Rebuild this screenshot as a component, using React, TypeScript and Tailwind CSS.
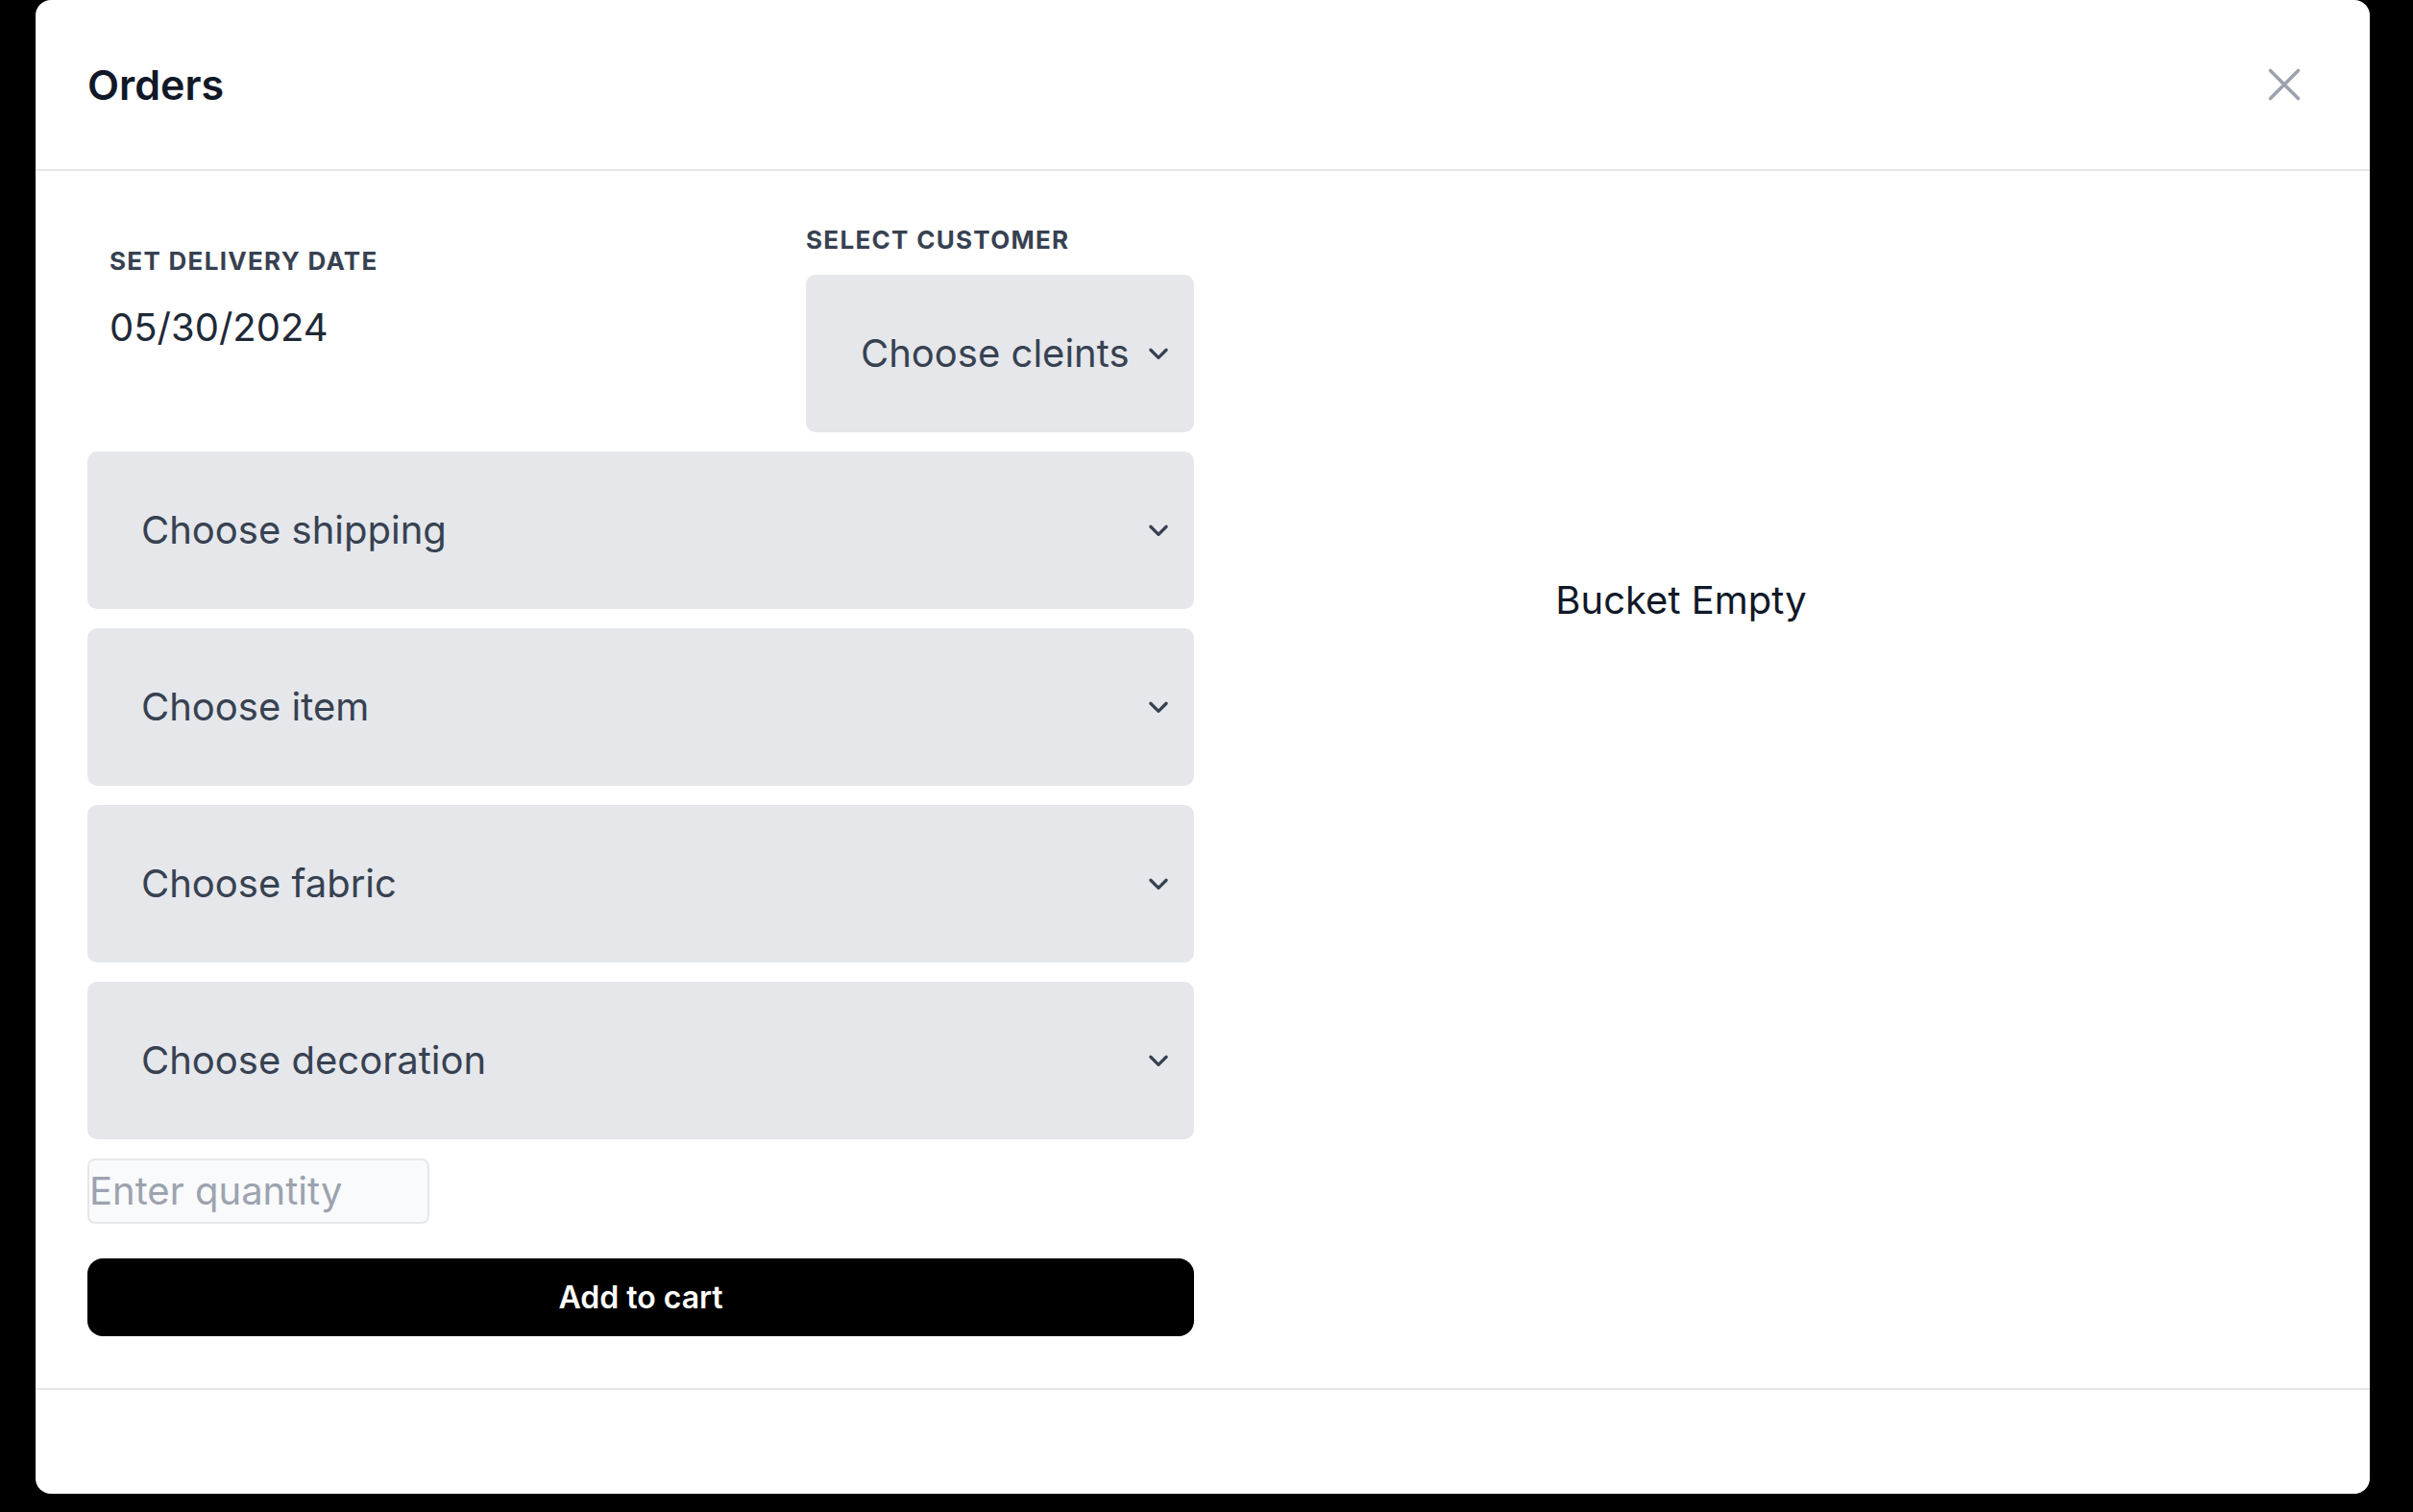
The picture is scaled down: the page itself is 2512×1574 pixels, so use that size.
import React from 'react';

const Chevron: React.FC = () => (
  <svg width="30" height="30" viewBox="0 0 24 24" fill="none" stroke="#374151" strokeWidth="2.6" strokeLinecap="round" strokeLinejoin="round">
    <path d="M5.5 9 12 15.5 18.5 9" />
  </svg>
);

const SelectBox: React.FC<{ label: string; className?: string }> = ({ label, className = '' }) => (
  <div className={`flex items-center justify-between h-[164px] bg-[#e5e7eb] rounded-[10px] pl-[56px] pr-[22px] ${className}`}>
    <span className="text-[40px] text-[#374151]">{label}</span>
    <Chevron />
  </div>
);

const App: React.FC = () => {
  const selects = ['Choose shipping', 'Choose item', 'Choose fabric', 'Choose decoration'];

  return (
    <div className="w-[2512px] h-[1574px] bg-black pl-[37px] overflow-hidden" style={{ fontFamily: 'Inter, "Noto Sans", sans-serif' }}>
      <div className="w-[2430px] h-[1555px] bg-white rounded-[16px] flex flex-col">
        <header className="h-[178px] flex items-center justify-between pl-[54px] pr-[60px] border-b-2 border-[#e5e7eb]">
          <h1 className="text-[43px] font-semibold text-[#111827]">Orders</h1>
          <button className="text-[#9ca3af]">
            <svg width="58" height="58" viewBox="0 0 24 24" fill="none" stroke="currentColor" strokeWidth="1.5" strokeLinecap="round">
              <path d="M6 18 18 6M6 6l12 12" />
            </svg>
          </button>
        </header>

        <div className="flex-1 flex px-[54px] pt-[56px]">
          <div className="w-[1152px] flex flex-col">
            <div className="flex justify-between items-start">
              <div className="pl-[23px] pt-[22px]">
                <div className="text-[26px] leading-[32px] font-bold tracking-wider text-[#374151]">SET DELIVERY DATE</div>
                <div className="mt-[25px] text-[40px] leading-[56px] text-[#1f2937]">05/30/2024</div>
              </div>
              <div className="w-[404px]">
                <div className="text-[26px] leading-[32px] font-bold tracking-wider text-[#374151]">SELECT CUSTOMER</div>
                <SelectBox label="Choose cleints" className="mt-[20px] h-[163px] pl-[57px]" />
              </div>
            </div>

            <div className="flex flex-col gap-[20px] mt-[20px]">
              {selects.map((s) => (
                <SelectBox key={s} label={s} />
              ))}
              <div className="w-[356px] h-[68px] bg-[#f9fafb] border-2 border-[#e5e7eb] rounded-[8px] flex items-center">
                <span className="text-[40px] text-[#9ca3af] leading-none">Enter quantity</span>
              </div>
            </div>

            <button className="mt-[36px] h-[81px] w-full bg-black rounded-[16px] text-white text-[32px] font-semibold">
              Add to cart
            </button>
          </div>

          <div className="flex-1 flex justify-center pr-[156px] pt-[363px]">
            <span className="text-[40px] text-[#111827] leading-[56px] h-[56px]">Bucket Empty</span>
          </div>
        </div>

        <div className="h-[110px] border-t-2 border-[#e5e7eb]" />
      </div>
    </div>
  );
};

export default App;
